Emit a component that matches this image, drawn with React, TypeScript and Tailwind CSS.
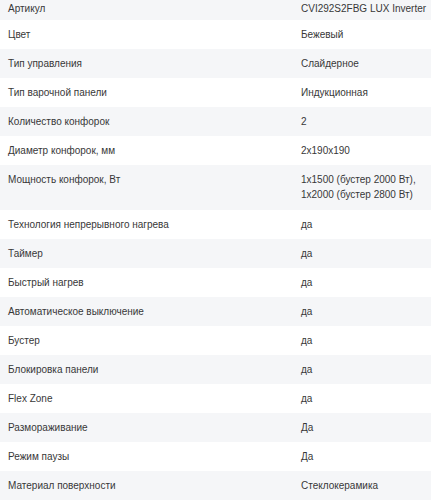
import React from "react";

const rows: [string, React.ReactNode, boolean?][] = [
  ["Артикул", "CVI292S2FBG LUX Inverter"],
  ["Цвет", "Бежевый"],
  ["Тип управления", "Слайдерное"],
  ["Тип варочной панели", "Индукционная"],
  ["Количество конфорок", "2"],
  ["Диаметр конфорок, мм", "2x190x190"],
  [
    "Мощность конфорок, Вт",
    <>
      1x1500 (бустер 2000 Вт),
      <br />
      1x2000 (бустер 2800 Вт)
    </>,
    true,
  ],
  ["Технология непрерывного нагрева", "да"],
  ["Таймер", "да"],
  ["Быстрый нагрев", "да"],
  ["Автоматическое выключение", "да"],
  ["Бустер", "да"],
  ["Блокировка панели", "да"],
  ["Flex Zone", "да"],
  ["Размораживание", "Да"],
  ["Режим паузы", "Да"],
  ["Материал поверхности", "Стеклокерамика"],
];

export default function App() {
  return (
    <div
      className="w-[431px] h-[500px] overflow-hidden bg-white text-[#383838] text-[10px] leading-[15px]"
      style={{ fontFamily: "'Liberation Sans', Arial, sans-serif" }}
    >
      <div className="mt-[-8px] flex flex-col">
        {rows.map(([k, v, tall], i) => (
          <div
            key={k}
            className={`grid grid-cols-[293px_1fr] pl-[8px] pr-[4px] ${
              i === 0 ? "pt-[9px] pb-[4px]" : tall ? "pt-[7px] pb-[8px]" : "pt-[7px] pb-[7px]"
            } ${i % 2 === 0 ? "bg-[#f5f6f8]" : "bg-white"}`}
          >
            <div>{k}</div>
            <div className="whitespace-nowrap">{v}</div>
          </div>
        ))}
      </div>
    </div>
  );
}
